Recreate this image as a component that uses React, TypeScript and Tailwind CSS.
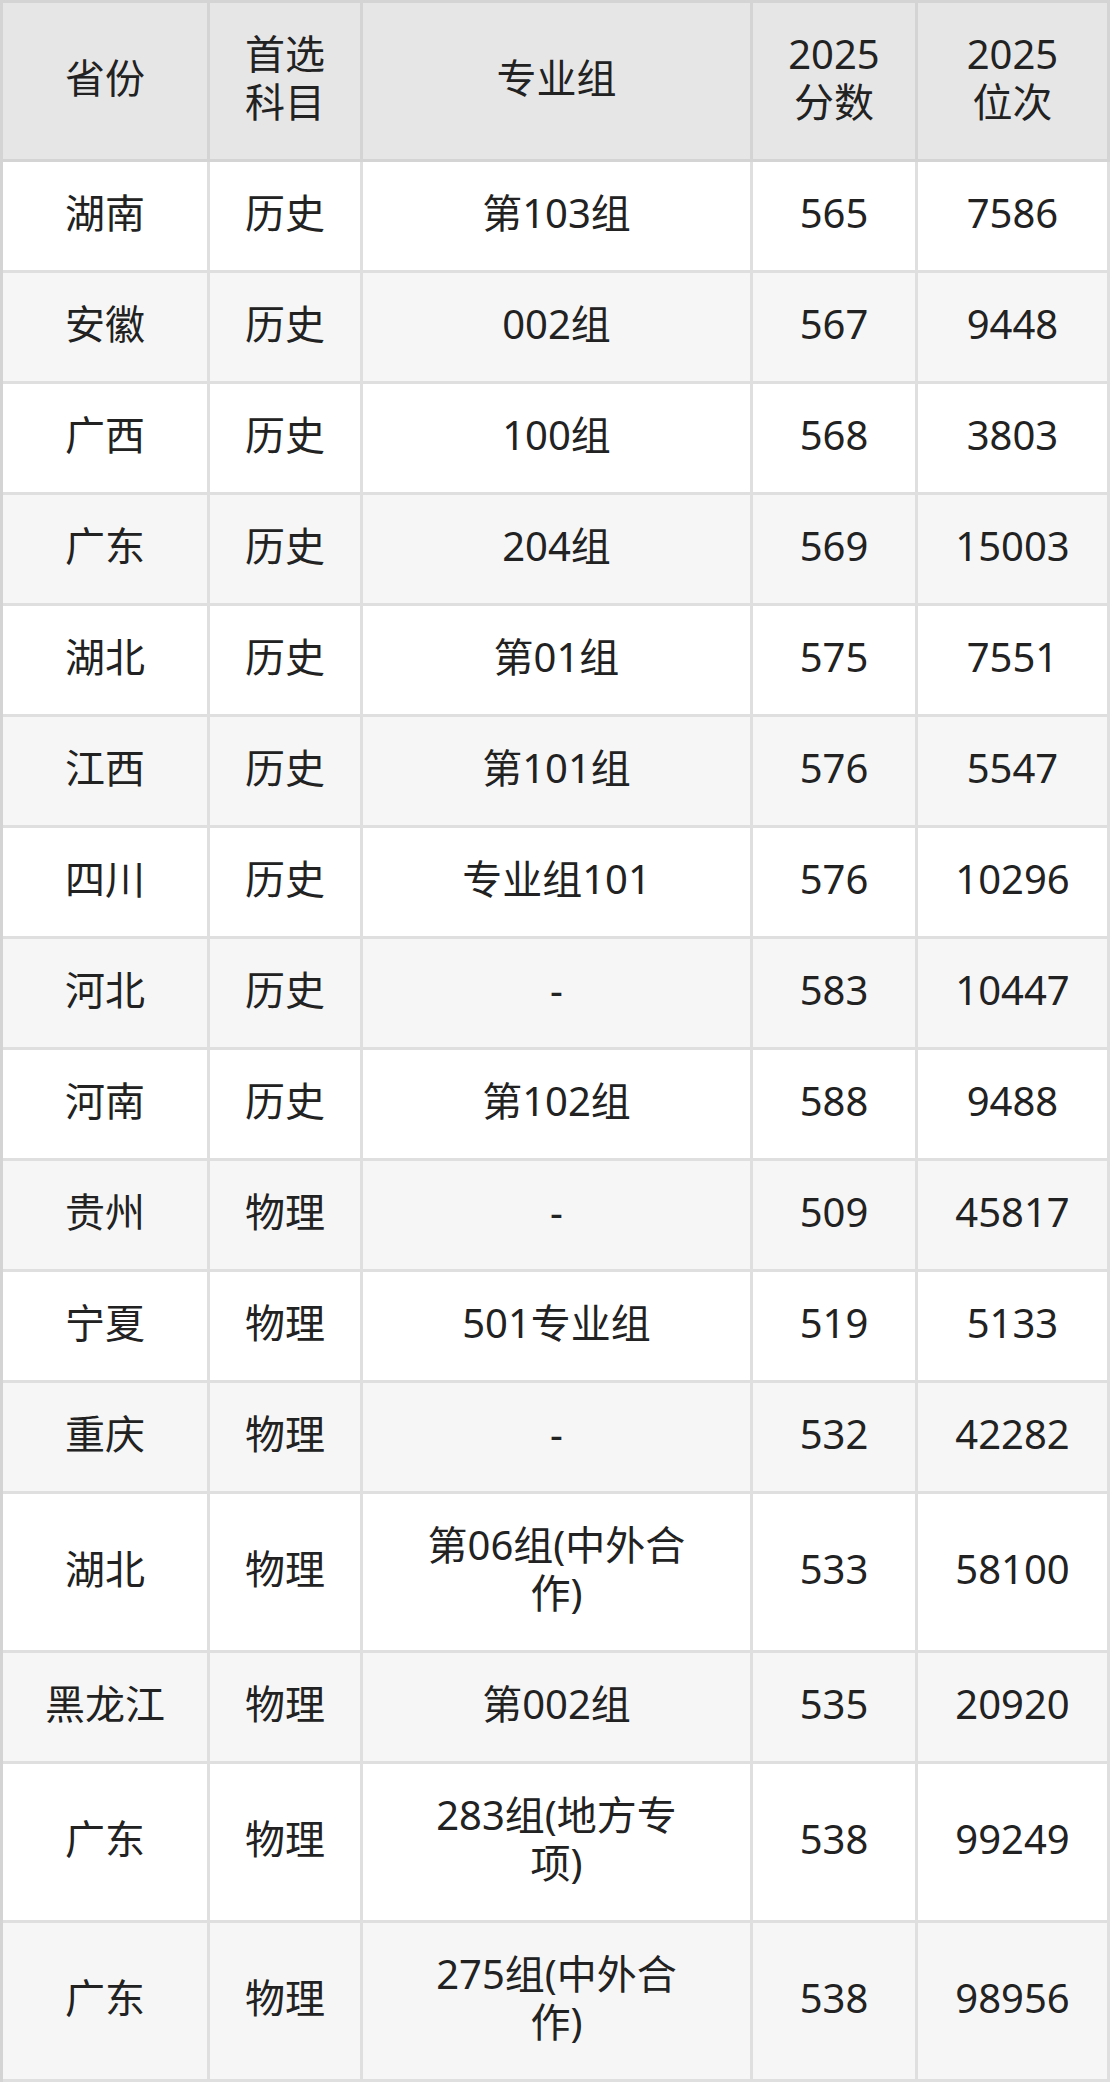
import React from "react";

type Row = {
  province: string;
  subject: string;
  group: string[];
  score: string;
  rank: string;
};

const rows: Row[] = [
  { province: "湖南", subject: "历史", group: ["第103组"], score: "565", rank: "7586" },
  { province: "安徽", subject: "历史", group: ["002组"], score: "567", rank: "9448" },
  { province: "广西", subject: "历史", group: ["100组"], score: "568", rank: "3803" },
  { province: "广东", subject: "历史", group: ["204组"], score: "569", rank: "15003" },
  { province: "湖北", subject: "历史", group: ["第01组"], score: "575", rank: "7551" },
  { province: "江西", subject: "历史", group: ["第101组"], score: "576", rank: "5547" },
  { province: "四川", subject: "历史", group: ["专业组101"], score: "576", rank: "10296" },
  { province: "河北", subject: "历史", group: ["-"], score: "583", rank: "10447" },
  { province: "河南", subject: "历史", group: ["第102组"], score: "588", rank: "9488" },
  { province: "贵州", subject: "物理", group: ["-"], score: "509", rank: "45817" },
  { province: "宁夏", subject: "物理", group: ["501专业组"], score: "519", rank: "5133" },
  { province: "重庆", subject: "物理", group: ["-"], score: "532", rank: "42282" },
  { province: "湖北", subject: "物理", group: ["第06组(中外合", "作)"], score: "533", rank: "58100" },
  { province: "黑龙江", subject: "物理", group: ["第002组"], score: "535", rank: "20920" },
  { province: "广东", subject: "物理", group: ["283组(地方专", "项)"], score: "538", rank: "99249" },
  { province: "广东", subject: "物理", group: ["275组(中外合", "作)"], score: "538", rank: "98956" },
];

const headers: string[][] = [["省份"], ["首选", "科目"], ["专业组"], ["2025", "分数"], ["2025", "位次"]];

const Lines = ({ lines }: { lines: string[] }) => (
  <span>
    {lines.map((l, i) => (
      <React.Fragment key={i}>
        {i > 0 && <br />}
        {l}
      </React.Fragment>
    ))}
  </span>
);

export default function App() {
  return (
    <div className="w-[1110px] bg-white font-['Noto_Sans','Noto_Sans_CJK_SC',sans-serif] text-[40px] leading-[48px] text-[#222]">
      <div className="grid grid-cols-[207px_153px_390px_165px_192px] border-l-[3px] border-t-[3px] border-[#d4d4d4]">
        {/* Header */}
        {headers.map((h, i) => (
          <div
            key={i}
            className="flex items-center justify-center text-center pt-[27px] pb-[33px] bg-[#e6e6e6] border-r-[3px] border-b-[3px] border-[#d4d4d4]"
          >
            <Lines lines={h} />
          </div>
        ))}

        {/* Body */}
        {rows.map((r, idx) => {
          const bg = idx % 2 === 0 ? "bg-white" : "bg-[#f6f6f6]";
          const cell = `flex items-center justify-center text-center pt-[27px] pb-[33px] border-r-[3px] border-b-[3px] border-[#dfdfdf] ${bg}`;
          return (
            <React.Fragment key={idx}>
              <div className={cell}>{r.province}</div>
              <div className={cell}>{r.subject}</div>
              <div className={cell}>
                <Lines lines={r.group} />
              </div>
              <div className={cell}>{r.score}</div>
              <div className={cell}>{r.rank}</div>
            </React.Fragment>
          );
        })}
      </div>
    </div>
  );
}
